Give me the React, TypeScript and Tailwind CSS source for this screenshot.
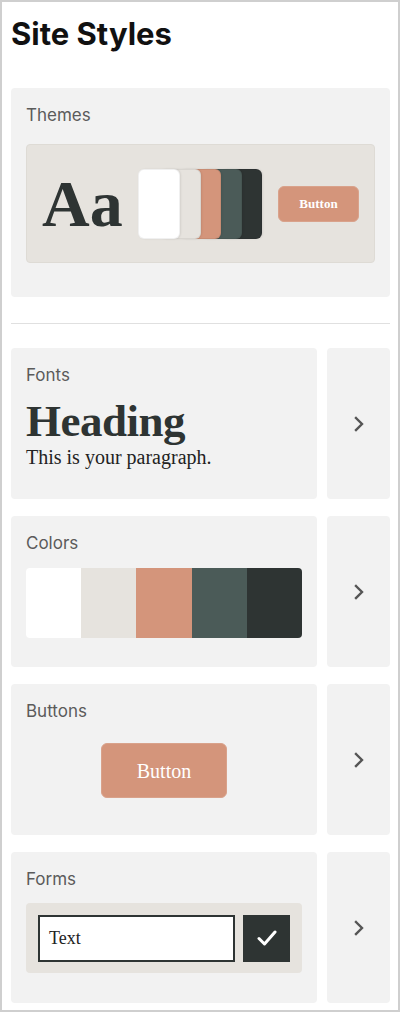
const sans = "font-['Inter','Liberation_Sans',sans-serif]";
const serif = "font-['Liberation_Serif','DejaVu_Serif',serif]";

const palette = ["bg-white", "bg-[#e6e3de]", "bg-[#d4957b]", "bg-[#4b5b58]", "bg-[#2e3433]"];

function Chevron() {
  return (
    <svg width="12" height="16" viewBox="0 0 12 16" fill="none">
      <polyline
        points="3,2 9,8 3,14"
        stroke="#555555"
        strokeWidth="2.4"
        strokeLinecap="square"
        strokeLinejoin="miter"
      />
    </svg>
  );
}

function Label({ children }: { children: React.ReactNode }) {
  return <p className={`${sans} text-[17px] leading-6 text-[#5b5b5b]`}>{children}</p>;
}

function Row({ label, children }: { label: string; children: React.ReactNode }) {
  return (
    <div className="flex h-[151px] gap-[10px]">
      <div className="flex-1 rounded-[4px] bg-[#f2f2f2] px-[15px] pt-[15px]">
        <Label>{label}</Label>
        {children}
      </div>
      <div className="flex w-[63px] items-center justify-center rounded-[4px] bg-[#f2f2f2]">
        <Chevron />
      </div>
    </div>
  );
}

export default function App() {
  return (
    <div className="h-[1012px] w-[400px] border-2 border-[#cfcfcf] bg-white pl-[9px] pr-[8px]">
      <h1 className={`${sans} mt-[14px] text-[31px] font-bold leading-[36px] text-[#111]`}>Site Styles</h1>

      {/* Themes */}
      <div className="mt-[36px] h-[209px] rounded-[4px] bg-[#f2f2f2] px-[15px] pt-[15px]">
        <Label>Themes</Label>
        <div className="mt-[17px] flex h-[119px] items-center justify-between rounded-[4px] border border-[#dedbd5] bg-[#e6e3de] px-[15px]">
          <span className={`${serif} text-[66px] font-bold leading-none text-[#2e3433]`}>Aa</span>
          <div className="flex h-[70px]">
            {palette.map((c, i) => (
              <div
                key={c}
                className={`${c} h-full w-[42px] rounded-[6px] border border-black/[0.06] shadow-[1px_0_2px_rgba(0,0,0,0.08)] ${
                  i > 0 ? "-ml-[21.5px]" : ""
                } ${["relative z-[5]", "relative z-[4]", "relative z-[3]", "relative z-[2]", "relative z-[1]"][i]}`}
              />
            ))}
          </div>
          <div
            className={`${serif} flex h-[36px] w-[81px] items-center justify-center rounded-[6px] border border-[#d9a28b] bg-[#d4957b] text-[13px] font-bold text-white`}
          >
            Button
          </div>
        </div>
      </div>

      <div className="mt-[26px] h-px bg-[#e0e0e0]" />

      <div className="mt-[24px] flex flex-col gap-[17px]">
        <Row label="Fonts">
          <p className={`${serif} mt-[12px] text-[45px] font-bold leading-none tracking-[-0.5px] text-[#2e3433]`}>
            Heading
          </p>
          <p className={`${serif} mt-[1px] text-[20px] leading-6 text-[#222]`}>This is your paragraph.</p>
        </Row>

        <Row label="Colors">
          <div className="mt-[13px] flex h-[70px] overflow-hidden rounded-[4px]">
            {palette.map((c) => (
              <div key={c} className={`${c} flex-1`} />
            ))}
          </div>
        </Row>

        <Row label="Buttons">
          <div className="mt-[20px] flex justify-center">
            <div
              className={`${serif} flex h-[55px] w-[126px] items-center justify-center rounded-[6px] border border-[#d9a28b] bg-[#d4957b] text-[20px] text-white`}
            >
              Button
            </div>
          </div>
        </Row>

        <Row label="Forms">
          <div className="mt-[12px] flex h-[70px] items-center gap-[8px] rounded-[4px] bg-[#e6e3de] px-[12px]">
            <div className="flex h-[47px] flex-1 items-center border-2 border-[#2e3433] bg-white pl-[9px]">
              <span className={`${serif} text-[18px] text-[#222]`}>Text</span>
            </div>
            <div className="flex h-[47px] w-[47px] items-center justify-center bg-[#2e3433]">
              <svg width="20" height="16" viewBox="0 0 20 16" fill="none">
                <polyline points="2,8.5 7.5,14 18,2" stroke="white" strokeWidth="3" strokeLinecap="round" strokeLinejoin="round" />
              </svg>
            </div>
          </div>
        </Row>
      </div>
    </div>
  );
}
